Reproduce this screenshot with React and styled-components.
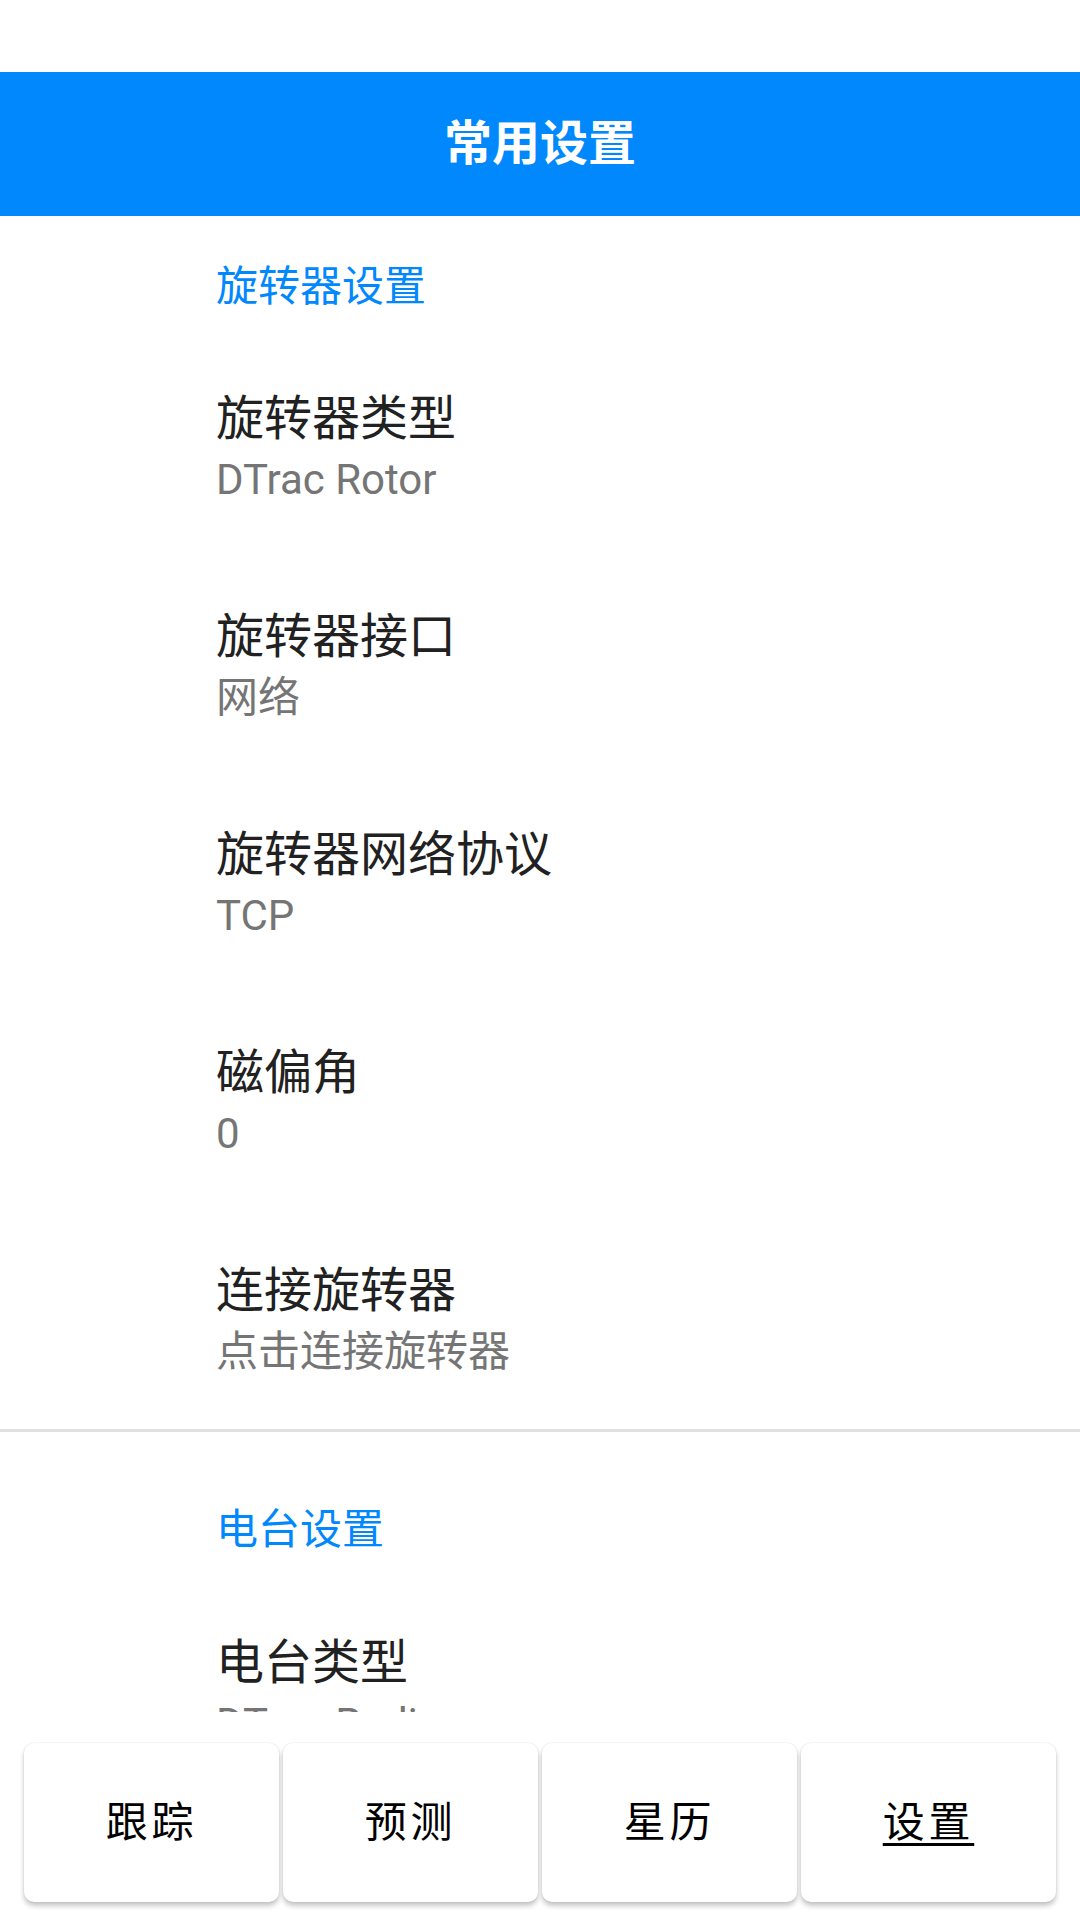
import React from 'react'
import styled, { createGlobalStyle } from 'styled-components'

const GlobalStyle = createGlobalStyle`
  html, body {
    margin: 0;
    padding: 0;
    background: #ffffff;
  }
  body {
    font-family: Roboto, "Noto Sans CJK SC", sans-serif;
  }
`

const sections = [
  {
    title: '旋转器设置',
    items: [
      { title: '旋转器类型', summary: 'DTrac Rotor' },
      { title: '旋转器接口', summary: '网络' },
      { title: '旋转器网络协议', summary: 'TCP' },
      { title: '磁偏角', summary: '0' },
      { title: '连接旋转器', summary: '点击连接旋转器' },
    ],
  },
  {
    title: '电台设置',
    items: [{ title: '电台类型', summary: 'DTrac Radio' }],
  },
]

const tabs = ['跟踪', '预测', '星历', '设置']

export default function App() {
  return (
    <>
      <GlobalStyle />
      <Screen>
        <StatusBar />
        <AppBar>
          <AppTitle>常用设置</AppTitle>
        </AppBar>
        <PrefList>
          {sections.map((section, i) => (
            <Section key={section.title} first={i === 0}>
              <CategoryTitle first={i === 0}>{section.title}</CategoryTitle>
              {section.items.map((item) => (
                <PrefItem key={item.title}>
                  <PrefTitle>{item.title}</PrefTitle>
                  <PrefSummary>{item.summary}</PrefSummary>
                </PrefItem>
              ))}
            </Section>
          ))}
        </PrefList>
        <BottomNav>
          {tabs.map((tab) => (
            <NavButton key={tab}>
              <NavLabel active={tab === '设置'}>{tab}</NavLabel>
            </NavButton>
          ))}
        </BottomNav>
      </Screen>
    </>
  )
}

const Screen = styled.div`
  width: 1080px;
  height: 1920px;
  display: flex;
  flex-direction: column;
  background: #ffffff;
  overflow: hidden;
`

const StatusBar = styled.div`
  height: 72px;
  flex: none;
  background: #ffffff;
`

const AppBar = styled.header`
  height: 144px;
  flex: none;
  background: #0288fd;
  display: flex;
  align-items: center;
  justify-content: center;
`

const AppTitle = styled.h1`
  margin: 0;
  color: #ffffff;
  font-size: 48px;
  font-weight: 700;
  line-height: 60px;
`

const PrefList = styled.main`
  flex: 1;
  min-height: 0;
  overflow: hidden;
`

const Section = styled.section`
  border-top: ${(p) => (p.first ? 'none' : '3px solid #e0e0e0')};
`

const CategoryTitle = styled.div`
  padding: ${(p) => (p.first ? '43px 0 24px' : '70px 0 25px')} 216px;
  padding-right: 0;
  color: #0288fd;
  font-size: 42px;
  line-height: 56px;
`

const PrefItem = styled.div`
  height: 218px;
  box-sizing: border-box;
  padding: 52px 0 44px 216px;
  display: flex;
  flex-direction: column;
`

const PrefTitle = styled.div`
  color: #212121;
  font-size: 48px;
  line-height: 56px;
`

const PrefSummary = styled.div`
  color: #757575;
  font-size: 42px;
  line-height: 66px;
`

const BottomNav = styled.nav`
  height: 208px;
  flex: none;
  box-sizing: border-box;
  padding: 31px 24px 18px;
  display: flex;
  gap: 4px;
  background: #ffffff;
`

const NavButton = styled.button`
  flex: 1;
  height: 159px;
  border: none;
  border-radius: 10px;
  background: #ffffff;
  box-shadow: 0 4px 5px rgba(0, 0, 0, 0.22), 0 0 2px rgba(0, 0, 0, 0.12);
  display: flex;
  align-items: center;
  justify-content: center;
  padding: 0;
  font-family: Roboto, "Noto Sans CJK SC", sans-serif;
`

const NavLabel = styled.span`
  color: #000000;
  font-size: 42px;
  line-height: 56px;
  letter-spacing: 0.089em;
  text-decoration: ${(p) => (p.active ? 'underline' : 'none')};
  text-decoration-thickness: 3px;
  text-underline-offset: 6px;
`
